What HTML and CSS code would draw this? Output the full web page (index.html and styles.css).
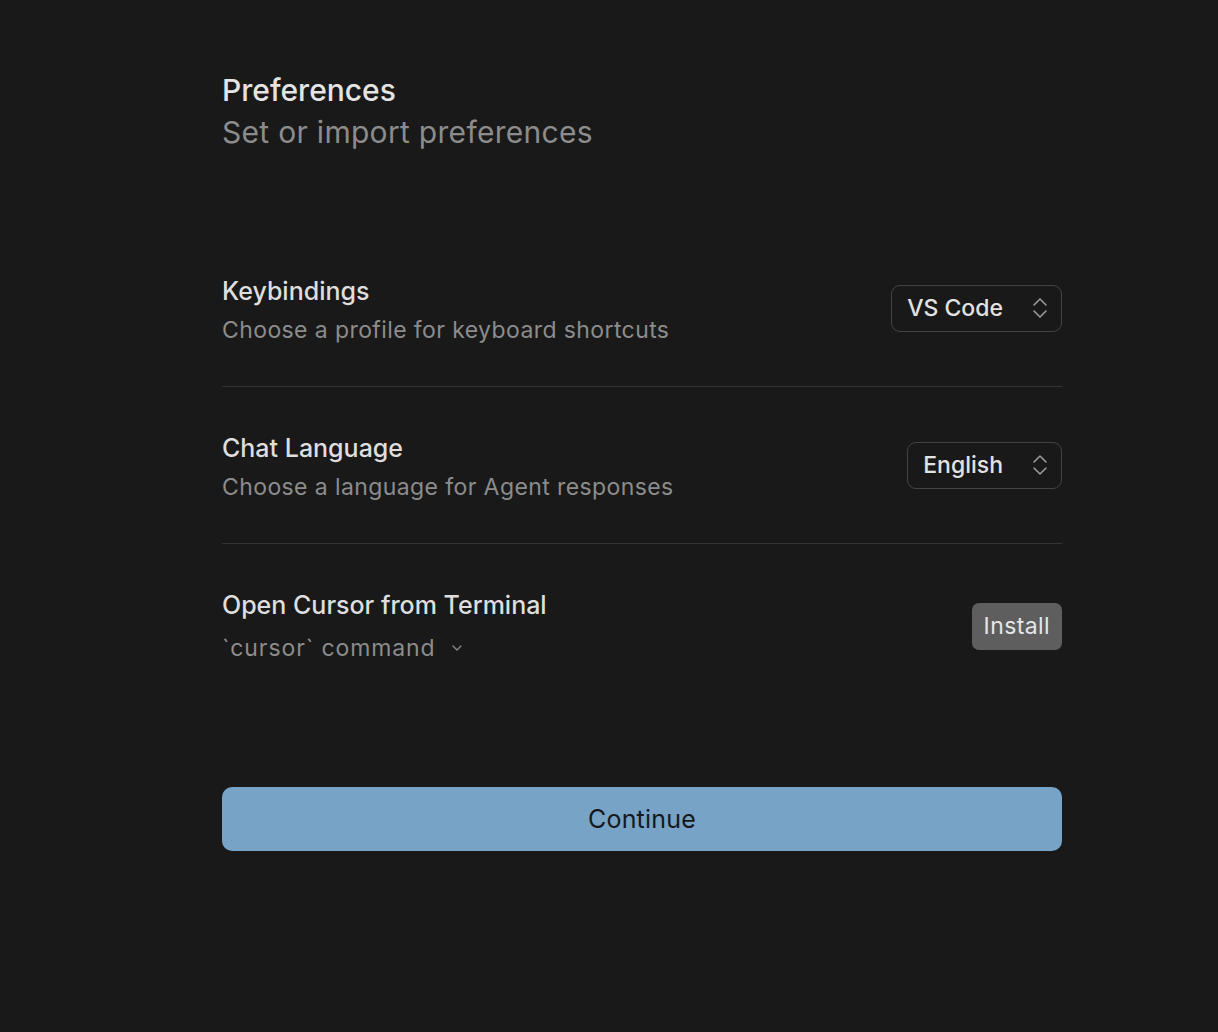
FILE: index.html
```html
<!DOCTYPE html>
<html>
<head>
<meta charset="utf-8">
<link rel="stylesheet" href="styles.css">
</head>
<body>
<main class="page">
  <header class="header">
    <h1 class="title">Preferences</h1>
    <p class="subtitle">Set or import preferences</p>
  </header>
  <section class="rows">
    <div class="row">
      <div class="text">
        <div class="row-title">Keybindings</div>
        <div class="row-sub">Choose a profile for keyboard shortcuts</div>
      </div>
      <div class="select">
        <span>VS Code</span>
        <svg class="updown" width="16" height="22" viewBox="0 0 16 22"><path d="M2 8 L8 2 L14 8 M2 14 L8 20 L14 14" fill="none" stroke="#9a9a9a" stroke-width="1.6" stroke-linecap="round" stroke-linejoin="round"/></svg>
      </div>
    </div>
    <div class="row">
      <div class="text">
        <div class="row-title">Chat Language</div>
        <div class="row-sub">Choose a language for Agent responses</div>
      </div>
      <div class="select">
        <span>English</span>
        <svg class="updown" width="16" height="22" viewBox="0 0 16 22"><path d="M2 8 L8 2 L14 8 M2 14 L8 20 L14 14" fill="none" stroke="#9a9a9a" stroke-width="1.6" stroke-linecap="round" stroke-linejoin="round"/></svg>
      </div>
    </div>
    <div class="row last">
      <div class="text">
        <div class="row-title">Open Cursor from Terminal</div>
        <div class="row-sub cmd">`cursor` command <svg class="caret" width="12" height="8" viewBox="0 0 12 8"><path d="M2 2 L6 6 L10 2" fill="none" stroke="#8a8a8a" stroke-width="1.3" stroke-linecap="round" stroke-linejoin="round"/></svg></div>
      </div>
      <button class="install">Install</button>
    </div>
  </section>
  <button class="continue">Continue</button>
</main>
</body>
</html>
```
FILE: styles.css
```css
html, body {
  margin: 0;
  padding: 0;
  background: #191919;
  font-family: Inter, "Noto Sans", sans-serif;
}
.page {
  width: 840px;
  margin-left: 222px;
  padding-top: 69px;
}
.header {
  margin-bottom: 77px;
}
.title {
  margin: 0;
  font-size: 30px;
  font-weight: 500;
  line-height: 42px;
  color: #e4e4e4;
}
.subtitle {
  margin: 0;
  font-size: 30px;
  font-weight: 400;
  line-height: 42px;
  letter-spacing: 0.3px;
  color: #8c8c8c;
}
.rows {
  display: flex;
  flex-direction: column;
}
.row {
  display: flex;
  align-items: center;
  justify-content: space-between;
  padding: 45px 0 41px;
  border-bottom: 1px solid #343434;
}
.row.last {
  border-bottom: none;
}
.row-title {
  font-size: 25px;
  line-height: 32px;
  font-weight: 500;
  color: #dedede;
}
.row-sub {
  margin-top: 8px;
  font-size: 23px;
  line-height: 30px;
  letter-spacing: 0.4px;
  color: #8c8c8c;
}
.cmd {
  margin-top: 12px;
  display: flex;
  align-items: center;
  gap: 15px;
  letter-spacing: 0.9px;
}
.select {
  box-sizing: border-box;
  height: 47px;
  margin-bottom: 4px;
  display: flex;
  align-items: center;
  gap: 29px;
  padding: 0 13px 0 15px;
  border: 1.5px solid #434343;
  border-radius: 9px;
  font-size: 23px;
  font-weight: 500;
  color: #e2e2e2;
}
.updown {
  display: block;
}
.install {
  height: 47px;
  padding: 0 12px;
  border: none;
  border-radius: 7px;
  background: #5e5e5e;
  color: #e6e6e6;
  font-family: inherit;
  font-size: 23px;
  font-weight: 400;
  letter-spacing: 0.4px;
}
.continue {
  display: block;
  width: 840px;
  height: 64px;
  margin-top: 83px;
  border: none;
  border-radius: 10px;
  background: #76a3c6;
  color: #15191d;
  font-family: inherit;
  font-size: 25px;
  font-weight: 400;
  letter-spacing: 0.2px;
}
```
